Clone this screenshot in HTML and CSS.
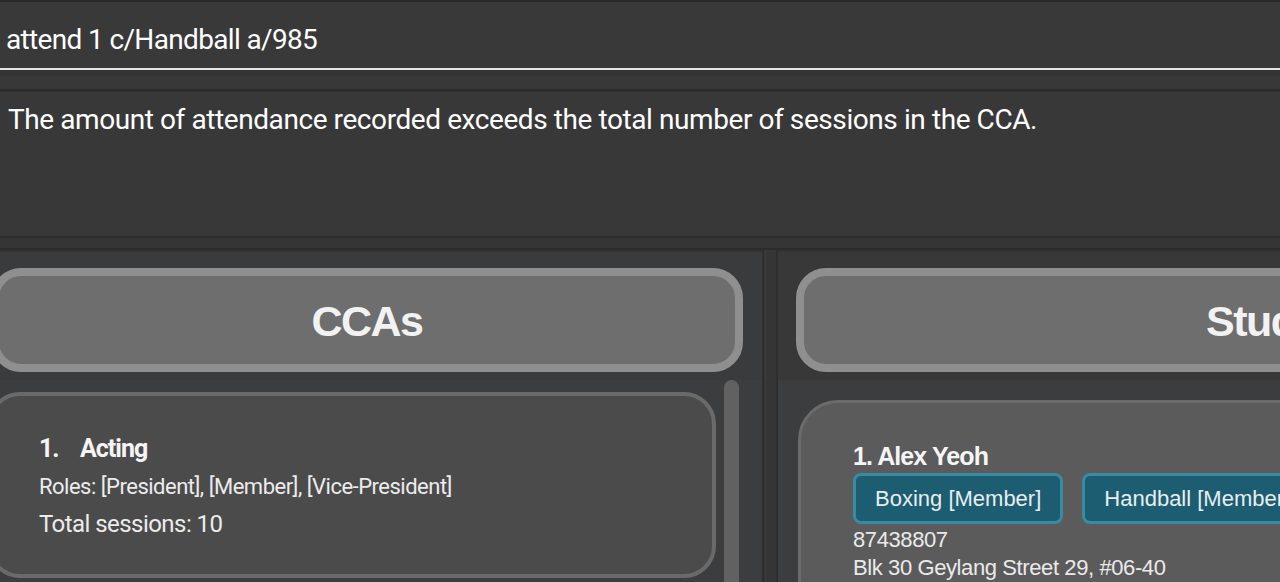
FILE: index.html
```html
<!DOCTYPE html>
<html>
<head>
<meta charset="utf-8">
<link rel="stylesheet" href="styles.css">
</head>
<body>
<div class="app">
  <div class="command">
    <div class="command-text">attend 1 c/Handball a/985</div>
  </div>
  <div class="sep sep-top"></div>
  <div class="result">
    <div class="result-text">The amount of attendance recorded exceeds the total number of sessions in the CCA.</div>
  </div>
  <div class="sep sep-bottom"></div>
  <div class="main">
    <div class="pane pane-left">
      <div class="header header-left"><span class="header-title">CCAs</span></div>
      <div class="list-row">
        <div class="list">
          <div class="card cca-card">
            <div class="cca-title"><span class="idx">1.</span><span>Acting</span></div>
            <div class="cca-roles">Roles: [President], [Member], [Vice-President]</div>
            <div class="cca-sessions">Total sessions: 10</div>
          </div>
        </div>
        <div class="scrollbar"></div>
      </div>
    </div>
    <div class="divider"><div class="divider-inner"></div></div>
    <div class="pane pane-right">
      <div class="header header-right"><span class="header-title">Students</span></div>
      <div class="list list-right">
        <div class="card student-card">
          <div class="student-name">1. Alex Yeoh</div>
          <div class="tags">
            <span class="tag">Boxing [Member]</span>
            <span class="tag">Handball [Member]</span>
          </div>
          <div class="student-line">87438807</div>
          <div class="student-line">Blk 30 Geylang Street 29, #06-40</div>
        </div>
      </div>
    </div>
  </div>
</div>
</body>
</html>
```

FILE: styles.css
```css
* { box-sizing: border-box; }
html, body {
  margin: 0;
  padding: 0;
  width: 1280px;
  height: 582px;
  overflow: hidden;
  background: #2d2d2d;
}
.app {
  display: flex;
  flex-direction: column;
  width: 1280px;
  height: 582px;
  overflow: hidden;
  font-family: Roboto, "Liberation Sans", sans-serif;
  color: #ffffff;
}
.command {
  height: 70px;
  flex: none;
  border-top: 2px solid #2a2a2a;
  border-bottom: 2px solid #e6e6e6;
  background: #393939;
  padding: 0 0 0 6px;
  display: flex;
  align-items: center;
}
.command-text {
  font-size: 28px;
  letter-spacing: -0.65px;
  line-height: 34px;
  margin-top: 10px;
}
.sep {
  flex: none;
  background: #353535;
}
.sep-top {
  height: 21px;
  border-top: 6px solid #333333;
  border-bottom: 2px solid #2b2b2b;
  background: #383838;
}
.result {
  height: 145px;
  flex: none;
  background: #383838;
  border-top: 1px solid #2f2f2f;
  padding: 12px 0 0 8px;
}
.result-text {
  font-size: 28px;
  letter-spacing: -0.42px;
  line-height: 32px;
}
.sep-bottom {
  height: 14px;
  border-top: 2px solid #2d2d2d;
  border-bottom: 2px solid #2b2b2b;
  background: #353535;
}
.main {
  flex: 1;
  display: flex;
  min-height: 0;
  background: #383838;
}
.pane {
  display: flex;
  flex-direction: column;
  overflow: hidden;
  background: #3a3b3c;
}
.pane-left {
  width: 762px;
  flex: none;
  border-top: 2px solid #333;
}
.divider {
  width: 16px;
  flex: none;
  background: #353535;
  border-left: 2px solid #2e2e2e;
  border-right: 2px solid #2e2e2e;
  display: flex;
  justify-content: center;
}
.divider-inner {
  width: 10px;
  border-left: 1px solid #3c3c3c;
}
.pane-right {
  flex: 1;
  min-width: 0;
  border-top: 2px solid #333;
  background: #383838;
  padding-left: 18px;
}
.header {
  flex: none;
  height: 104px;
  margin-top: 16px;
  border: 8px solid #8f8f8f;
  border-radius: 30px;
  background: #6e6e6e;
  display: flex;
  align-items: center;
  justify-content: center;
}
.header-left {
  width: 752px;
  margin-left: -9px;
}
.header-right {
  width: 992px;
}
.header-title {
  font-family: "Liberation Sans", Arial, sans-serif;
  font-weight: bold;
  font-size: 43px;
  letter-spacing: -1.5px;
  color: #f2f2f2;
  margin-top: 2px;
}
.list-row {
  display: flex;
  flex: 1;
  min-height: 0;
  margin-top: 8px;
  background: #3b3d3e;
}
.list {
  display: flex;
  flex-direction: column;
}
.cca-card {
  width: 728px;
  margin-left: -12px;
  margin-top: 12px;
  height: 186px;
  border: 4px solid #6a6a6a;
  border-radius: 32px;
  background: #4b4b4b;
  padding: 38px 0 0 47px;
}
.cca-title {
  font-weight: bold;
  font-size: 25px;
  letter-spacing: -1px;
  line-height: 30px;
  color: #f5f5f5;
}
.cca-title .idx {
  display: inline-block;
  width: 41px;
}
.cca-roles {
  font-size: 22px;
  letter-spacing: -0.5px;
  line-height: 28px;
  margin-top: 9px;
  color: #ececec;
}
.cca-sessions {
  font-size: 24px;
  letter-spacing: -0.55px;
  line-height: 30px;
  margin-top: 8px;
  color: #ececec;
}
.scrollbar {
  width: 15px;
  margin-left: 8px;
  margin-top: 0;
  height: 220px;
  border-radius: 8px;
  background: #616161;
}
.list-right {
  flex: 1;
  margin-left: -18px;
  padding-left: 20px;
  margin-top: 8px;
  background: #3b3d3e;
}
.student-card {
  width: 700px;
  margin-top: 20px;
  height: 240px;
  border: 3px solid #6b6b6b;
  border-radius: 40px;
  background: #5b5b5b;
  padding: 38px 0 0 52px;
  font-family: "Liberation Sans", Arial, sans-serif;
}
.student-name {
  font-weight: bold;
  font-size: 25px;
  letter-spacing: -0.9px;
  line-height: 30px;
  color: #f5f5f5;
}
.tags {
  display: flex;
  gap: 19px;
  margin-top: 2px;
  white-space: nowrap;
}
.tag {
  height: 51px;
  padding: 0 19px;
  border: 3px solid #3a8aa1;
  border-radius: 8px;
  background: #1d5d72;
  font-size: 22px;
  line-height: 45px;
  color: #e8eef0;
}
.student-line {
  font-size: 22px;
  letter-spacing: -0.4px;
  line-height: 28px;
  margin-top: 2px;
  color: #eaeaea;
}
.student-line + .student-line {
  margin-top: 0;
}
```
